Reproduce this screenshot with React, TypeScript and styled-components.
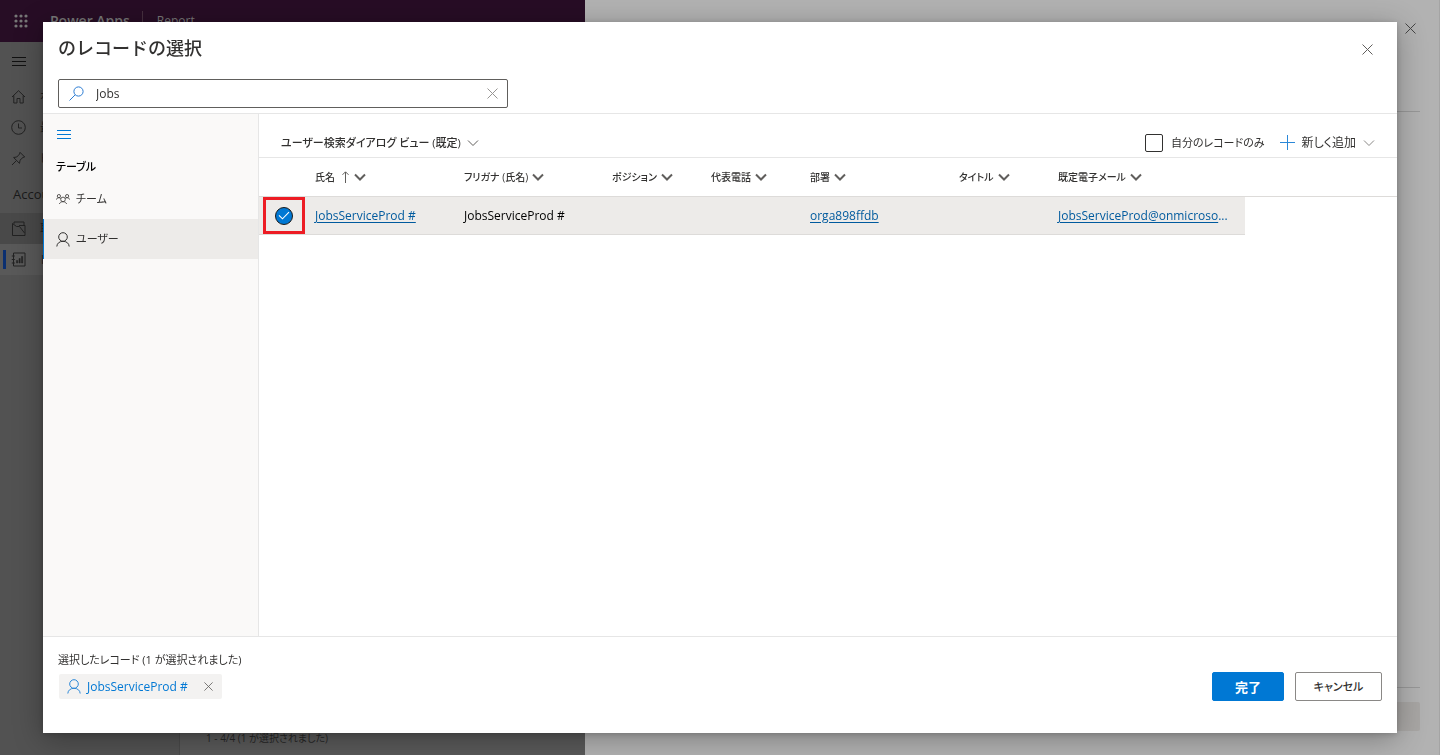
import React, { useState } from "react";
import styled, { createGlobalStyle } from "styled-components";

const GlobalStyle = createGlobalStyle`
  *, *::before, *::after { box-sizing: border-box; }
  body {
    margin: 0;
    overflow: hidden;
    font-family: "Open Sans", "Noto Sans CJK JP", sans-serif;
    font-feature-settings: "palt";
    font-size: 12px;
    line-height: 20px;
    color: #323130;
  }
  button, input { font: inherit; font-feature-settings: inherit; color: inherit; }
  button { padding: 0; border: 0; background: none; cursor: pointer; white-space: nowrap; }
  h1, h2, p { margin: 0; padding: 0; }
  svg { display: block; flex: none; }
`;

/* Dimmed application behind the dialog */

const Backdrop = styled.div`
  display: flex;
  height: 100vh;
`;

const AppArea = styled.div`
  flex: 1;
  min-width: 0;
  display: flex;
  flex-direction: column;
  background: #595959;
`;

const AppBar = styled.header`
  display: flex;
  align-items: center;
  height: 42px;
  padding: 0 13px;
  background: #270d25;
  color: #777;
`;

const Brand = styled.span`
  margin-left: 21px;
  padding-right: 12px;
  border-right: 1px solid #46303f;
  font-size: 14px;
  font-weight: 600;
`;

const AppName = styled.span`
  margin-left: 14px;
`;

const AppBody = styled.div`
  flex: 1;
  display: flex;
`;

const SiteMap = styled.nav`
  width: 180px;
  border-right: 1px solid #494949;
  background: #525252;
  color: #1a1a1a;
`;

const MenuRow = styled.div`
  display: flex;
  align-items: center;
  height: 39px;
  padding-left: 12px;
`;

const SiteGroup = styled.div`
  padding: 10px 13px 9px;
  font-size: 13px;
`;

const SiteItem = styled.a<{ $tone?: string; $selected?: boolean }>`
  display: flex;
  align-items: center;
  gap: 14px;
  height: 31px;
  padding-left: 8px;
  border-left: 3px solid transparent;
  background: ${(p) => p.$tone ?? "transparent"};
  color: #222;
  text-decoration: none;
  ${(p) =>
    p.$selected &&
    `&::before { content: ""; width: 3px; height: 19px; margin: 0 -9px 0 -8px; background: #0b2f70; }`}
`;

const AppContent = styled.div`
  flex: 1;
  display: flex;
  align-items: flex-end;
  padding: 0 26px 7px;
  color: #262626;
  font-size: 10px;
`;

const SidePanel = styled.aside`
  flex: 0 0 855px;
  display: flex;
  flex-direction: column;
  justify-content: space-between;
  padding-right: 19px;
  border-right: 1px solid #a4a4a4;
  background: #b2b2b2;
`;

const PanelTop = styled.div`
  display: flex;
  justify-content: flex-end;
  align-items: flex-start;
  height: 112px;
  padding: 23px 4px 0;
  border-bottom: 1px solid #989898;
`;

const PanelBottom = styled.div`
  display: flex;
  justify-content: flex-end;
  height: 68px;
  padding-top: 14px;
  border-top: 1px solid #989898;
`;

const PanelAction = styled.button`
  width: 80px;
  height: 29px;
  border-radius: 2px;
  background: #a8a6a4;
`;

/* Lookup dialog */

const Dialog = styled.section`
  position: fixed;
  inset: 22px 43px;
  display: flex;
  flex-direction: column;
  background: #fff;
  box-shadow: 0 6px 28px rgba(0, 0, 0, 0.3), 0 1px 6px rgba(0, 0, 0, 0.18);
`;

const DialogHeader = styled.header`
  display: flex;
  justify-content: space-between;
  align-items: center;
  height: 57px;
  padding: 0 24px 2px 15px;
`;

const Title = styled.h1`
  padding-bottom: 3px;
  font-size: 18px;
  line-height: 24px;
  font-weight: 500;
  font-feature-settings: normal;
`;

const SearchRow = styled.div`
  padding: 0 15px 5px;
  border-bottom: 1px solid #e6e6e6;
`;

const SearchBox = styled.div`
  display: flex;
  align-items: center;
  width: 450px;
  height: 29px;
  padding: 0 9px 0 10px;
  border: 1px solid #605e5c;
  border-radius: 2px;
`;

const SearchInput = styled.input`
  flex: 1;
  min-width: 0;
  padding: 0 12px;
  border: 0;
  outline: 0;
  background: none;
`;

const DialogBody = styled.div`
  flex: 1;
  min-height: 0;
  display: flex;
  border-bottom: 1px solid #e6e6e6;
`;

const TableNav = styled.nav`
  flex: none;
  width: 216px;
  border-right: 1px solid #e6e6e6;
  background: #faf9f8;
`;

const NavToggle = styled.button`
  display: flex;
  align-items: center;
  height: 41px;
  padding: 0 14px;
`;

const NavHeading = styled.h2`
  padding: 2px 13px;
  font-size: 11px;
  font-weight: 500;
  color: #000;
`;

const NavItem = styled.button<{ $selected?: boolean }>`
  display: flex;
  align-items: center;
  gap: 6px;
  width: 100%;
  height: 40px;
  padding-left: 12px;
  border-left: 1px solid ${(p) => (p.$selected ? "#0078d4" : "transparent")};
  background: ${(p) => (p.$selected ? "#edebe9" : "transparent")};
  font-size: 11px;
`;

const Results = styled.div`
  flex: 1;
  min-width: 0;
`;

const CommandBar = styled.div`
  display: flex;
  justify-content: space-between;
  align-items: center;
  height: 44px;
  padding: 14px 22px 0;
  border-bottom: 1px solid #e6e6e6;
`;

const ViewPicker = styled.button`
  display: flex;
  align-items: center;
  gap: 6px;
  font-size: 11px;
  font-weight: 500;
`;

const Commands = styled.div`
  display: flex;
  align-items: center;
  gap: 15px;
`;

const OwnRecords = styled.label`
  display: flex;
  align-items: center;
  gap: 8px;
  font-size: 11px;
`;

const Tick = styled.input`
  appearance: none;
  width: 18px;
  height: 18px;
  margin: 0;
  border: 1px solid #323130;
  border-radius: 2px;
  &:checked { background: #0078d4; }
`;

const AddNew = styled.button`
  display: flex;
  align-items: center;
  gap: 7px;
`;

const Grid = styled.table`
  width: 100%;
  table-layout: fixed;
  border-collapse: separate;
  border-spacing: 0;
`;

const HeadCell = styled.th`
  height: 39px;
  padding: 0 8px;
  border-bottom: 1px solid #dddbd9;
  text-align: left;
  font-weight: 500;
`;

const SortButton = styled.button`
  display: flex;
  align-items: center;
  gap: 4px;
  font-size: 10px;
`;

const Cell = styled.td`
  height: 38px;
  padding: 0 8px;
  overflow: hidden;
  white-space: nowrap;
  border-bottom: 1px solid #dddbd9;
  background: #edebe9;
  color: #000;
`;

const CheckCell = styled(Cell)`
  padding: 0 0 0 4px;
`;

const RecordLink = styled.a`
  color: #005a9e;
  text-decoration: underline;
  text-underline-offset: 2px;
`;

const Ellipsis = styled.span`
  color: #005a9e;
`;

const RowCheck = styled.label`
  display: grid;
  place-items: center;
  width: 42px;
  height: 37px;
  border: 3px solid #ed1c24;
  & > * { grid-area: 1 / 1; }
`;

const RoundTick = styled.input`
  appearance: none;
  width: 18px;
  height: 18px;
  margin: 0;
  border: 1px solid #1b1a19;
  border-radius: 50%;
  &:checked { background: #0078d4; }
`;

const DialogFooter = styled.footer`
  display: flex;
  justify-content: space-between;
  height: 96px;
  padding: 13px 15px 0;
`;

const SelectedCount = styled.p`
  font-size: 11px;
`;

const Chip = styled.div`
  display: flex;
  align-items: center;
  width: 163px;
  height: 25px;
  margin: 4px 1px 0;
  padding: 0 9px 0 8px;
  border-radius: 2px;
  background: #f3f2f1;
  color: #0078d4;
`;

const ChipName = styled.span`
  flex: 1;
  margin-left: 6px;
  white-space: nowrap;
`;

const Actions = styled.div`
  display: flex;
  gap: 11px;
  padding-top: 22px;
`;

const ActionButton = styled.button<{ $primary?: boolean }>`
  width: ${(p) => (p.$primary ? "72px" : "87px")};
  height: 29px;
  border: 1px solid ${(p) => (p.$primary ? "#0078d4" : "#8a8886")};
  border-radius: 2px;
  background: ${(p) => (p.$primary ? "#0078d4" : "#fff")};
  color: ${(p) => (p.$primary ? "#fff" : "#323130")};
  font-size: ${(p) => (p.$primary ? "13px" : "11px")};
  font-weight: ${(p) => (p.$primary ? 700 : 500)};
`;

/* Icons */

type IconProps = { size?: number; color?: string; weight?: number };

const Close = ({ size = 11, color = "#605e5c" }: IconProps) => (
  <svg width={size} height={size} viewBox="0 0 11 11" stroke={color} fill="none">
    <path d="M.5.5l10 10M10.5.5l-10 10" />
  </svg>
);

const Lines = ({ color = "#0078d4" }: IconProps) => (
  <svg width="14" height="9" viewBox="0 0 14 9" stroke={color} fill="none">
    <path d="M0 .5h14M0 4.500h14M0 8.500h14" />
  </svg>
);

const Chevron = ({ size = 12, color = "#605e5c", weight = 1 }: IconProps) => (
  <svg width={size} height={size} viewBox="0 0 12 12" stroke={color} strokeWidth={weight} fill="none">
    <path d="M1 3.500l5 5 5-5" />
  </svg>
);

const Person = ({ color = "#323130" }: IconProps) => (
  <svg width="14" height="15" viewBox="0 0 14 15" stroke={color} fill="none">
    <circle cx="7" cy="5" r="4.300" />
    <path d="M.8 14.500C1 11.300 3.500 9.300 7 9.300s6 2 6.200 5.200" />
  </svg>
);

const Team = () => (
  <svg width="14" height="11" viewBox="0 0 14 11" stroke="#484644" strokeWidth=".9" fill="none">
    <circle cx="7" cy="5.400" r="2.300" />
    <path d="M3.400 10C3.800 8.600 5 7.700 7 7.700s3.200.9 3.600 2.300" />
    <circle cx="2.900" cy="2.100" r="1.600" />
    <circle cx="11.100" cy="2.100" r="1.600" />
    <path d="M.4 5.600C.6 4.400 1.600 3.700 2.900 3.700c.8 0 1.400.3 1.900.8M13.600 5.600c-.2-1.200-1.200-1.900-2.500-1.900-.8 0-1.400.3-1.900.8" />
  </svg>
);

const Search = () => (
  <svg width="15" height="15" viewBox="0 0 15 15" stroke="#2b7cd3" fill="none">
    <circle cx="9.500" cy="5.500" r="4.600" />
    <path d="M6.200 8.800L.5 14.500" />
  </svg>
);

const Plus = () => (
  <svg width="15" height="15" viewBox="0 0 15 15" stroke="#2b88d8" fill="none">
    <path d="M7.500 0v15M0 7.500h15" />
  </svg>
);

const SortArrow = styled.svg`
  margin: 0 1px 0 3px;
`;

const ArrowUp = () => (
  <SortArrow width="7" height="12" viewBox="0 0 7 12" stroke="#605e5c" fill="none">
    <path d="M3.500 12V1M.5 3.800l3-3 3 3" />
  </SortArrow>
);

const Check = () => (
  <svg width="12" height="9" viewBox="0 0 12 9" stroke="#fff" strokeWidth="1.100" fill="none">
    <path d="M1 4.300l3.500 3.500L11 1.200" />
  </svg>
);

const Waffle = () => (
  <svg width="16" height="16" viewBox="0 0 16 16" fill="#777">
    {[3, 8, 13].map((y) => [3, 8, 13].map((x) => <circle key={`${x}-${y}`} cx={x} cy={y} r="1.600" />))}
  </svg>
);

const siteIcons: Record<string, React.ReactNode> = {
  home: <path d="M1 8L7.500 1.700 14 8M2.800 6.500v7.500h3.200V9.500h3V14h3.200V6.500" />,
  clock: (
    <>
      <circle cx="7.500" cy="7.500" r="6.800" />
      <path d="M7.500 3.500v4.500h3.500" />
    </>
  ),
  pin: <path d="M1 14l4.300-4.300M9 1.300l4.700 4.700-1.700.4-3 2.800-.5 3.200L2.600 6.500l3.200-.5 2.800-3z" />,
  account: (
    <>
      <path d="M1.500 14.500V2.500l4 3h3l5 6.500" />
      <path d="M1.500 14.500h12.500V4.500H8M3 2.800V1h10v3.500" />
    </>
  ),
  report: (
    <>
      <path d="M2.500 1h11.500v13H2.500zM.8 4h3M.8 7.500h3M.8 11h3" />
      <path d="M5.500 8.500v2.500h1.200V8.500zM8 6.500v4.500h1.200V6.500zM10.500 4.500v6.500h1.200V4.500z" fill="#222" strokeWidth=".5" />
    </>
  ),
};

const SiteIcon = ({ name }: { name: string }) => (
  <svg width="15" height="15" viewBox="0 0 15 15" stroke="#222" fill="none">
    {siteIcons[name]}
  </svg>
);

const columns = [
  { label: "氏名", width: 149, sorted: true },
  { label: "フリガナ (氏名)", width: 148 },
  { label: "ポジション", width: 99 },
  { label: "代表電話", width: 99 },
  { label: "部署", width: 149 },
  { label: "タイトル", width: 99 },
  { label: "既定電子メール", width: 195 },
];

const CheckCol = styled.col`
  width: 48px;
`;

const DataCol = styled.col<{ $width: number }>`
  width: ${(p) => p.$width}px;
`;

export default function App() {
  const [query, setQuery] = useState("Jobs");
  const [selected, setSelected] = useState(true);

  return (
    <>
      <GlobalStyle />
      <Backdrop aria-hidden="true">
        <AppArea>
          <AppBar>
            <Waffle />
            <Brand>Power Apps</Brand>
            <AppName>Report</AppName>
          </AppBar>
          <AppBody>
            <SiteMap>
              <MenuRow><Lines color="#111" /></MenuRow>
              <SiteItem href="#home"><SiteIcon name="home" />ホ</SiteItem>
              <SiteItem href="#recent"><SiteIcon name="clock" />最</SiteItem>
              <SiteItem href="#pinned"><SiteIcon name="pin" />ピ</SiteItem>
              <SiteGroup>Accou</SiteGroup>
              <SiteItem href="#accounts" $tone="#494949"><SiteIcon name="account" />取</SiteItem>
              <SiteItem href="#reports" $tone="#595959" $selected><SiteIcon name="report" />レ</SiteItem>
            </SiteMap>
            <AppContent>1 - 4/4 (1 が選択されました)</AppContent>
          </AppBody>
        </AppArea>
        <SidePanel>
          <PanelTop><Close color="#444" /></PanelTop>
          <PanelBottom><PanelAction tabIndex={-1} /></PanelBottom>
        </SidePanel>
      </Backdrop>

      <Dialog role="dialog" aria-labelledby="lookup-title">
        <DialogHeader>
          <Title id="lookup-title">のレコードの選択</Title>
          <button aria-label="閉じる"><Close /></button>
        </DialogHeader>
        <SearchRow>
          <SearchBox>
            <Search />
            <SearchInput aria-label="検索" value={query} onChange={(e) => setQuery(e.target.value)} />
            <button aria-label="クリア" onClick={() => setQuery("")}><Close color="#979593" /></button>
          </SearchBox>
        </SearchRow>
        <DialogBody>
          <TableNav>
            <NavToggle aria-label="メニュー"><Lines /></NavToggle>
            <NavHeading>テーブル</NavHeading>
            <NavItem><Team />チーム</NavItem>
            <NavItem $selected><Person />ユーザー</NavItem>
          </TableNav>
          <Results>
            <CommandBar>
              <ViewPicker>ユーザー検索ダイアログ ビュー (既定)<Chevron /></ViewPicker>
              <Commands>
                <OwnRecords><Tick type="checkbox" />自分のレコードのみ</OwnRecords>
                <AddNew><Plus />新しく追加<Chevron color="#8a8886" /></AddNew>
              </Commands>
            </CommandBar>
            <Grid>
              <colgroup>
                <CheckCol />
                {columns.map((c) => <DataCol key={c.label} $width={c.width} />)}
                <col />
              </colgroup>
              <thead>
                <tr>
                  <HeadCell />
                  {columns.map((c) => (
                    <HeadCell key={c.label} scope="col">
                      <SortButton>{c.label}{c.sorted && <ArrowUp />}<Chevron weight={2} /></SortButton>
                    </HeadCell>
                  ))}
                  <HeadCell />
                </tr>
              </thead>
              <tbody>
                <tr>
                  <CheckCell>
                    <RowCheck>
                      <RoundTick
                        type="checkbox"
                        aria-label="JobsServiceProd #"
                        checked={selected}
                        onChange={(e) => setSelected(e.target.checked)}
                      />
                      {selected && <Check />}
                    </RowCheck>
                  </CheckCell>
                  <Cell><RecordLink href="#user">JobsServiceProd #</RecordLink></Cell>
                  <Cell>JobsServiceProd #</Cell>
                  <Cell />
                  <Cell />
                  <Cell><RecordLink href="#unit">orga898ffdb</RecordLink></Cell>
                  <Cell />
                  <Cell><RecordLink href="#mail">JobsServiceProd@onmicroso</RecordLink><Ellipsis>...</Ellipsis></Cell>
                </tr>
              </tbody>
            </Grid>
          </Results>
        </DialogBody>
        <DialogFooter>
          <div>
            <SelectedCount>選択したレコード (1 が選択されました)</SelectedCount>
            <Chip>
              <Person color="#2b88d8" />
              <ChipName>JobsServiceProd #</ChipName>
              <button aria-label="削除"><Close size={9} /></button>
            </Chip>
          </div>
          <Actions>
            <ActionButton $primary>完了</ActionButton>
            <ActionButton>キャンセル</ActionButton>
          </Actions>
        </DialogFooter>
      </Dialog>
    </>
  );
}
